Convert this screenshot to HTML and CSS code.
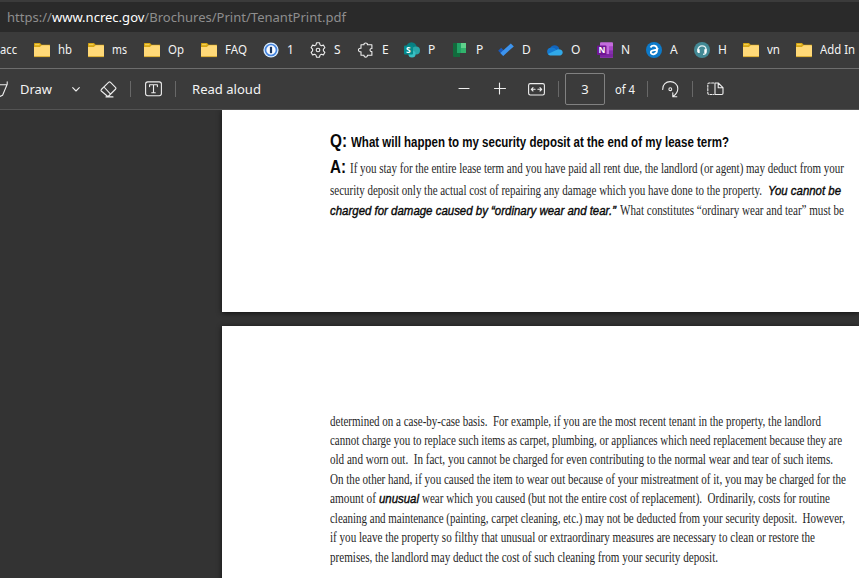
FILE: index.html
```html
<!DOCTYPE html>
<html lang="en">
<head>
<meta charset="utf-8">
<title>TenantPrint.pdf</title>
<link rel="stylesheet" href="styles.css">
</head>
<body>
<svg class="defs" aria-hidden="true">
  <symbol id="folder" viewBox="0 0 16 16"><path d="M0 1.5Q0 1 .7 1H6l1.6 1.7H16V5H0z" fill="#d6a514"/><path d="M1 2.7h4.5" stroke="#f8d85e"/><path d="M0 5h5.8l2-1.8H15q1 0 1 1V14q0 1-1 1H1q-1 0-1-1z" fill="#ffd978"/><path d="M0 14.6h16" stroke="#d9ab30"/></symbol>
</svg>
<header class="address"><span class="fit" data-width="339">https://<b>www.ncrec.gov</b>/Brochures/Print/TenantPrint.pdf</span></header>
<nav class="bookmarks">
  <a class="acc"><span class="fit" data-width="17">acc</span></a>
  <a><svg><use href="#folder"/></svg><span class="fit" data-width="14">hb</span></a>
  <a><svg><use href="#folder"/></svg><span class="fit" data-width="15">ms</span></a>
  <a><svg><use href="#folder"/></svg><span class="fit" data-width="16">Op</span></a>
  <a><svg><use href="#folder"/></svg><span class="fit" data-width="22">FAQ</span></a>
  <a><svg viewBox="0 0 16 16"><circle cx="8" cy="8" r="7.6" fill="#d9edff"/><circle cx="8" cy="8" r="5.5" fill="#f6faff" stroke="#4685df" stroke-width="1.7"/><rect x="6.9" y="4.7" width="2.2" height="6.6" rx=".7" fill="#17345f"/></svg>1</a>
  <a><svg viewBox="0 0 16 16" class="stroke"><path d="M6.5.8h3l.5 2.1 1.3.8 2.1-.6 1.5 2.6L13.4 7.2v1.6l1.5 1.5-1.5 2.6-2.1-.6-1.3.8-.5 2.1h-3L6 13.1l-1.3-.8-2.1.6-1.5-2.6 1.5-1.5V7.2L1.1 5.7l1.5-2.6 2.1.6L6 2.9z"/><circle cx="8" cy="8" r="1.8"/></svg>S</a>
  <a><svg viewBox="0 0 16 16" class="stroke"><path d="M3 2.8h3C5.5.3 9.9.3 9.4 2.8h4.5v3.7c-2.5-.4-2.5 3.4 0 3v3.7H9.4c.5 2.5-3.9 2.5-3.4 0H3V9.7C-.4 10.4-.4 5.7 3 6.3z"/></svg>E</a>
  <a><svg viewBox="0 0 16 16"><circle cx="7.5" cy="5.5" r="5.2" fill="#087f82"/><circle cx="12" cy="8.5" r="4" fill="#2aa7a9"/><circle cx="8" cy="12" r="3.6" fill="#38bfc3"/><rect y="3.4" width="9" height="9" rx="1" fill="#058a8b"/><text x="2" y="10.8" class="letter">S</text></svg>P</a>
  <a><svg viewBox="0 0 16 16"><path d="M1 1h7v14H2q-1 0-1-1z" fill="#126b3d"/><path d="M5 1h9v10H5z" fill="#21a366"/><path d="M9 1h5v5H9z" fill="#5fd18b"/><path d="M9 6h5v5H9z" fill="#32b36c"/></svg>P</a>
  <a><svg viewBox="0 0 16 16"><path d="M.2 8.8 3.2 5.8l5 5-3 3z" fill="#195abd"/><path d="M5.2 13.9 2.3 11 12.8 1.4l3 3z" fill="#3d94ee"/></svg>D</a>
  <a><svg viewBox="0 0 16 16"><path d="M3 6.5c2-4.8 8.5-3.6 9.2.2L8 12z" fill="#1264bb"/><path d="M3.7 5.7C-.5 6-1 11.8 2.5 13h9L9.5 7.8Q7 5.1 3.7 5.7" fill="#1479d0"/><path d="m1 12 9.4-4.5c5-1.4 7.4 4.4 3 5.9H3Q1.9 13.4 1 12" fill="#31a9e8"/></svg>O</a>
  <a><svg viewBox="0 0 16 16"><rect x="3" y=".3" width="13" height="15.4" rx="1" fill="#c36bdc"/><path d="M12 4.2h4v4h-4z" fill="#a846c8"/><path d="M12 8.2h4v3.8h-4z" fill="#842eae"/><path d="M3 12h13v2.8l-.9.9H4l-1-.9z" fill="#7b24a0"/><rect y="3.5" width="9.5" height="9.5" rx="1" fill="#711594"/><text x="1.5" y="11.2" class="letter">N</text></svg>N</a>
  <a><svg viewBox="0 0 16 16"><circle cx="8" cy="8" r="8" fill="#0d7ac9"/><path d="M4.5 5.5C6 2.7 11 3 11 6.8v1.5c0 5-6.5 5-6.2 1.7.2-2.8 6.3-1.1 7.2-3.7" fill="none" stroke="#fff" stroke-width="1.8"/></svg>A</a>
  <a><svg viewBox="0 0 16 16"><circle cx="8" cy="8" r="8" fill="#438995"/><path d="M3.9 8c0-5.5 8.2-5.5 8.2 0M12 10c0 1.6-1.3 2.3-3 2.3" fill="none" stroke="#e5f2f3" stroke-width="1.3"/><path d="M3.2 7.2h2.5v3.7H4.3L3.2 10zM10.3 7.2h2.5V10l-1.1.9h-1.4z" fill="#fff"/></svg>H</a>
  <a><svg><use href="#folder"/></svg><span class="fit" data-width="13">vn</span></a>
  <a><svg><use href="#folder"/></svg><span class="fit" data-width="35">Add In</span></a>
</nav>
<div class="toolbar">
  <svg class="stroke pen" viewBox="0 0 9 20"><path d="M-2 5.8h8.6M7.2 2.8v2.5L2.6 16.3 0 17.4"/></svg>
  <span class="draw"><span class="fit" data-width="32">Draw</span></span>
  <svg class="stroke chevron" viewBox="0 0 8 5"><path d="m.7.7 3.3 3.3L7.3.7"/></svg>
  <svg class="stroke eraser" viewBox="0 0 17 17"><path d="M10.3 1.2 15.7 6.6q.6.7 0 1.4l-7 7q-.7.7-1.5 0L1.3 10q-.7-.7 0-1.5L8.8 1.2q.7-.6 1.5 0ZM4 6l6.3 6.8M6 15.9h7"/></svg>
  <i class="rule r1"></i>
  <svg class="stroke textbox" viewBox="0 0 17 16"><rect x=".6" y=".9" width="15.8" height="13.8" rx="2.2"/><path d="M4.6 5.6V3.8h7.8v1.8M8.5 3.8v8M6.7 11.8h3.6"/></svg>
  <i class="rule r2"></i>
  <span class="read"><span class="fit" data-width="69">Read aloud</span></span>
  <svg class="stroke minus" viewBox="0 0 12 12"><path d="M1 5.5h10"/></svg>
  <svg class="stroke plus" viewBox="0 0 12 12"><path d="M.5 5.5h11M5.5 0v11"/></svg>
  <svg class="stroke fitw" viewBox="0 0 17 13"><rect x=".6" y=".6" width="15.8" height="11.4" rx="1.7"/><path d="M3.3 6.3h3.8M9.9 6.3h3.8M5 4.6 3.3 6.3 5 8M12 4.6l1.7 1.7L12 8"/></svg>
  <i class="rule r3"></i>
  <span class="pageno">3</span>
  <span class="of"><span class="fit" data-width="20">of 4</span></span>
  <i class="rule r4"></i>
  <svg class="stroke rotate" viewBox="0 0 17 17"><path d="M.7 8.5C.2-1.7 15.8-2 15.8 7.8q0 4.2-4.6 7.6M10.8 11.8v4h4"/><circle cx="8.3" cy="8.2" r="1.4"/></svg>
  <i class="rule r5"></i>
  <svg class="stroke pages" viewBox="0 0 17 14"><path d="M8 1v11.5h6.8q1.2 0 1.2-1.2V5.7L11.2 1H8M11.2 1v4.7H16"/><path d="M6.8 1H2.2Q.8 1 .8 2.4v8.7q0 1.4 1.4 1.4h4.6" stroke-dasharray="2.2 1.4"/></svg>
</div>
<main class="viewer">
  <article class="sheet first">
    <p class="line q"><span class="mark"><span class="fit" data-width="17">Q:</span></span><b class="fit" data-width="378">What will happen to my security deposit at the end of my lease term?</b></p>
    <p class="line a"><span class="mark"><span class="fit" data-width="16">A:</span></span><span class="fit" data-width="494">If you stay for the entire lease term and you have paid all rent due, the landlord (or agent) may deduct from your</span></p>
    <p class="line second"><span class="fit" data-width="432">security deposit only the actual cost of repairing any damage which you have done to the property.</span><em class="fit gap" data-width="73">You cannot be</em></p>
    <p class="line third"><em class="fit" data-width="286">charged for damage caused by “ordinary wear and tear.”</em><span class="fit gap-s" data-width="224">What constitutes “ordinary wear and tear” must be</span></p>
  </article>
  <article class="sheet next">
    <p class="line"><span class="fit" data-width="491">determined on a case-by-case basis.&nbsp; For example, if you are the most recent tenant in the property, the landlord</span></p>
    <p class="line"><span class="fit" data-width="512">cannot charge you to replace such items as carpet, plumbing, or appliances which need replacement because they are</span></p>
    <p class="line"><span class="fit" data-width="503">old and worn out.&nbsp; In fact, you cannot be charged for even contributing to the normal wear and tear of such items.</span></p>
    <p class="line"><span class="fit" data-width="516">On the other hand, if you caused the item to wear out because of your mistreatment of it, you may be charged for the</span></p>
    <p class="line"><span class="fit" data-width="46">amount of</span><em class="fit gap-xs" data-width="40">unusual</em><span class="fit gap-xs" data-width="408">wear which you caused (but not the entire cost of replacement).&nbsp; Ordinarily, costs for routine</span></p>
    <p class="line"><span class="fit" data-width="515">cleaning and maintenance (painting, carpet cleaning, etc.) may not be deducted from your security deposit.&nbsp; However,</span></p>
    <p class="line"><span class="fit" data-width="485">if you leave the property so filthy that unusual or extraordinary measures are necessary to clean or restore the</span></p>
    <p class="line"><span class="fit" data-width="388">premises, the landlord may deduct the cost of such cleaning from your security deposit.</span></p>
  </article>
</main>
<script src="fit.js"></script>
</body>
</html>
```
FILE: styles.css
```css
* { box-sizing: border-box; }
body { margin: 0; width: 859px; height: 578px; overflow: hidden; display: flex; flex-direction: column; background: #333; color: #f4f4f4; font: 12px/16px "Noto Sans", "Open Sans", sans-serif; }
svg { display: block; flex: none; overflow: visible; }
.defs { position: absolute; width: 0; height: 0; }
.fit { display: inline-block; flex: none; white-space: nowrap; transform-origin: 0 50%; }
.stroke { fill: none; stroke: #eee; stroke-width: 1.1; stroke-linejoin: round; stroke-linecap: round; }
.letter { fill: #fff; font: bold 8.5px "Open Sans", sans-serif; }

.address { flex: none; height: 32px; padding: 6px 0 0 7px; border-top: 2px solid #3b3b3b; background: #2a2a2a; color: #8e8e8e; font-size: 13px; line-height: 18px; }
.address b { color: #fff; font-weight: 400; }

.bookmarks { flex: none; height: 37px; display: grid; grid-template-columns: 34px 54px 56px 57px 62px 47px 48px 46px 48px 46px 49px 50px 49px 48px 49px 53px 1fr; align-items: center; background: #3b3b3b; border-bottom: 1px solid #6d6d6d; }
.bookmarks a { display: flex; align-items: center; gap: 8px; height: 16px; }
.bookmarks svg { width: 16px; height: 16px; }

.toolbar { flex: none; height: 41px; display: flex; align-items: center; background: #3b3b3b; border-bottom: 1px solid #545454; font-size: 13px; }
.pen { width: 9px; height: 20px; margin-right: 11px; }
.draw { width: 52px; }
.chevron { width: 8px; height: 5px; margin-right: 20px; }
.eraser { width: 17px; height: 17px; }
.rule { flex: none; width: 1px; height: 16px; background: #686868; }
.r1 { margin: 0 14px 0 13px; }
.textbox { width: 17px; height: 16px; }
.r2 { margin: 0 16px 0 13px; }
.read { width: 266px; }
.minus { width: 12px; height: 12px; margin-right: 24px; }
.plus { width: 12px; height: 12px; margin-right: 22px; }
.fitw { width: 17px; height: 13px; }
.r3 { margin: 0 6px 0 13px; }
.pageno { width: 40px; height: 32px; border: 1px solid #818181; border-radius: 2px; line-height: 30px; text-align: center; margin-right: 10px; }
.of { width: 32px; }
.r4 { margin-right: 14px; }
.rotate { width: 17px; height: 17px; }
.r5 { margin: 0 14px 0 13px; }
.pages { width: 17px; height: 14px; }

.viewer { flex: 1; min-height: 0; display: flex; flex-direction: column; gap: 14px; padding-left: 222px; overflow: hidden; }
.sheet { flex: none; padding-left: 108px; background: #fff; color: #262626; box-shadow: 0 1px 5px #111; font: 14px/19.45px "Liberation Serif", serif; }
.first { height: 202px; padding-top: 18px; }
.next { height: 260px; padding-top: 85.5px; }
.line { margin: 0; height: 19.45px; display: flex; align-items: baseline; white-space: nowrap; }
.line b, .line em, .mark { font-family: "Liberation Sans Narrow", "Liberation Sans", sans-serif; color: #080808; }
.line em { font-size: 13px; font-weight: 400; -webkit-text-stroke: .4px #080808; }
.mark { width: 21px; font-size: 19px; font-weight: 700; }
.line.q { height: 27px; line-height: 26px; }
.q b { font-size: 14.5px; }
.line.a { height: 26px; line-height: 23px; }
.a .mark { width: 20px; }
.line.second { height: 20px; line-height: 20px; }
.line.third { height: 20px; line-height: 20px; }
.gap { margin-left: 6px; }
.gap-s { margin-left: 4px; }
.gap-xs { margin-left: 3px; }
```
FILE: fit.js
```js
// Condense or widen each text run to its measured column width.
document.querySelectorAll('.fit').forEach(function (run) {
  var natural = run.getBoundingClientRect().width;
  var width = Number(run.dataset.width);
  run.style.transform = 'scaleX(' + width / natural + ')';
  run.style.marginRight = (width - natural) + 'px';
});
```
